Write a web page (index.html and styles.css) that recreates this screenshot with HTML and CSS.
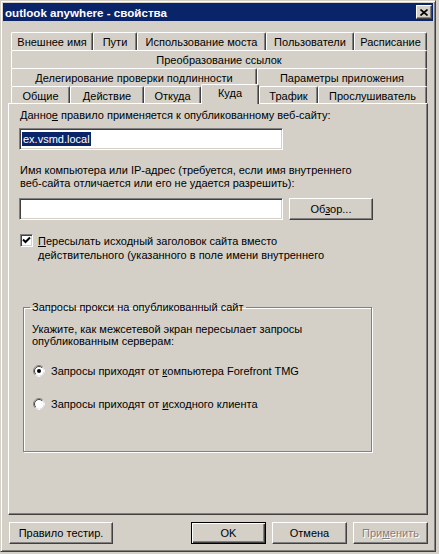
FILE: index.html
```html
<!DOCTYPE html>
<html lang="ru">
<head>
    <meta charset="UTF-8">
    <title>outlook anywhere - свойства</title>
    <link rel="stylesheet" href="styles.css">
</head>
<body>
    <div class="window">
        <div class="titlebar">
            <span class="title">outlook anywhere - свойства</span>
            <button class="close-btn">
                <svg width="8" height="7" viewBox="0 0 8 7"><path d="M0.5 0.5 L7.5 6.5 M7.5 0.5 L0.5 6.5" stroke="#000" stroke-width="1.6" fill="none"/></svg>
            </button>
        </div>
        <div class="dialog">
            <!-- tab strip, bottom row holds the selected tab -->
            <div class="tabs">
                <div class="tab-row">
                    <div class="tab tab-extname">Внешнее имя</div>
                    <div class="tab tab-paths">Пути</div>
                    <div class="tab tab-bridge">Использование моста</div>
                    <div class="tab tab-users">Пользователи</div>
                    <div class="tab tab-schedule">Расписание</div>
                </div>
                <div class="tab-row">
                    <div class="tab tab-full">Преобразование ссылок</div>
                </div>
                <div class="tab-row">
                    <div class="tab tab-deleg">Делегирование проверки подлинности</div>
                    <div class="tab tab-appset">Параметры приложения</div>
                </div>
                <div class="tab-row tab-row-last">
                    <div class="tab tab-general">Общие</div>
                    <div class="tab tab-action">Действие</div>
                    <div class="tab tab-from">Откуда</div>
                    <div class="tab tab-to tab-active">Куда</div>
                    <div class="tab tab-traffic">Трафик</div>
                    <div class="tab tab-listener">Прослушиватель</div>
                </div>
            </div>

            <div class="panel">
                <div class="label">Данно<u>е</u> правило применяется к опубликованному веб-сайту:</div>
                <div class="field field-first"><span class="selected-text">ex.vsmd.local</span></div>

                <div class="label label-multi">Имя компьютера или IP-адрес (требуется, если имя внутреннего<br>веб-сайта отличается или его не удается разрешить):</div>
                <div class="field-row">
                    <div class="field"></div>
                    <button class="btn btn-browse">Об<u>з</u>ор...</button>
                </div>

                <div class="check-row">
                    <span class="checkbox">
                        <svg width="9" height="9" viewBox="0 0 9 9"><path d="M1 3.5 L3.5 6 L8 1.5" stroke="#000" stroke-width="2" fill="none"/></svg>
                    </span>
                    <div class="check-label"><u>П</u>ересылать исходный заголовок сайта вместо<br>действительного (указанного в поле имени внутреннего</div>
                </div>

                <fieldset class="group">
                    <legend>Запросы прокси на опубликованный сайт</legend>
                    <div class="group-text">Укажите, как межсетевой экран пересылает запросы<br>опубликованным серверам:</div>
                    <div class="radio-row radio-first">
                        <svg class="radio" width="12" height="12" viewBox="0 0 12 12">
                            <circle cx="6" cy="6" r="5.5" fill="#fff" stroke="#808080"/>
                            <path d="M9.9 2.1 A5.5 5.5 0 0 1 2.1 9.9" stroke="#fff" fill="none"/>
                            <path d="M2.8 9.2 A4.5 4.5 0 0 1 9.2 2.8" stroke="#404040" fill="none"/>
                            <circle cx="6" cy="6" r="2" fill="#000"/>
                        </svg>
                        <span>Запросы приходят от <u>к</u>омпьютера Forefront TMG</span>
                    </div>
                    <div class="radio-row radio-second">
                        <svg class="radio" width="12" height="12" viewBox="0 0 12 12">
                            <circle cx="6" cy="6" r="5.5" fill="#fff" stroke="#808080"/>
                            <path d="M9.9 2.1 A5.5 5.5 0 0 1 2.1 9.9" stroke="#fff" fill="none"/>
                            <path d="M2.8 9.2 A4.5 4.5 0 0 1 9.2 2.8" stroke="#404040" fill="none"/>
                        </svg>
                        <span>Запросы приходят от <u>и</u>сходного клиента</span>
                    </div>
                </fieldset>
            </div>

            <div class="button-bar">
                <button class="btn btn-test">Правило тестир.</button>
                <div class="button-group">
                    <button class="btn btn-default">OK</button>
                    <button class="btn">Отмена</button>
                    <button class="btn btn-disabled">При<u>м</u>енить</button>
                </div>
            </div>
        </div>
    </div>
</body>
</html>
```

FILE: styles.css
```css
body, html { margin: 0; padding: 0; background-color: #d4d0c8; font-family: "Liberation Sans", Arial, sans-serif; font-size: 11px; color: #000; }
.window { width: 436px; height: 552px; box-sizing: border-box; border: 1px solid; border-color: #d4d0c8 #404040 #404040 #d4d0c8; box-shadow: inset 1px 1px #fff, inset -1px -1px #808080; padding: 2px; display: flex; flex-direction: column; }
.titlebar { height: 18px; flex: none; background-color: #0a246a; display: flex; align-items: center; justify-content: space-between; padding: 0 1px 0 2px; }
.title { color: white; font-weight: bold; font-size: 11.6px; }
.close-btn { width: 16px; height: 14px; padding: 0; box-sizing: border-box; background-color: #d4d0c8; border: 1px solid; border-color: #fff #404040 #404040 #fff; box-shadow: inset -1px -1px #808080; display: flex; align-items: center; justify-content: center; }
.dialog { flex: 1; display: flex; flex-direction: column; padding: 11px 5px 0 5px; }

/* tabs */
.tabs { margin: 0 1px 0 3px; }
.tab-row { display: flex; height: 18px; }
.tab-row-last { height: 17px; }
.tab { box-sizing: border-box; flex: none; background-color: #d4d0c8; border-top: 1px solid #fff; border-left: 1px solid #fff; border-right: 1px solid #404040; border-radius: 2px 2px 0 0; box-shadow: inset -1px 0 #808080; display: flex; align-items: center; justify-content: center; white-space: nowrap; padding-top: 1px; }
.tab-active { position: relative; z-index: 1; margin: -2px 0 -1px; padding: 0 0 4px; }
.tab-extname { width: 82px; }
.tab-paths { width: 44px; }
.tab-bridge { width: 129px; }
.tab-users { width: 88px; }
.tab-schedule { width: 73px; }
.tab-full { width: 416px; }
.tab-deleg { width: 246px; }
.tab-appset { width: 170px; }
.tab-general { width: 59px; }
.tab-action { width: 74px; }
.tab-from { width: 57px; }
.tab-to { width: 58px; }
.tab-traffic { width: 59px; }
.tab-listener { width: 109px; }

/* tab page */
.panel { height: 412px; box-sizing: border-box; border: 1px solid; border-color: #fff #404040 #404040 #fff; box-shadow: inset -1px -1px #808080; padding: 4px 10px 0 10px; }
.label { line-height: 14px; padding-left: 1px; white-space: nowrap; }
.label-multi { line-height: 13px; margin-top: 14px; }
.field { width: 264px; height: 22px; box-sizing: border-box; background-color: white; border: 1px solid; border-color: #808080 #fff #fff #808080; box-shadow: inset 1px 1px #404040, inset -1px -1px #d4d0c8; padding: 0 2px; display: flex; align-items: center; }
.field-first { margin-top: 6px; }
.selected-text { background-color: #0a246a; color: white; line-height: 14px; padding: 0 1px; }
.field-row { display: flex; gap: 6px; margin-top: 8px; }
.btn { box-sizing: border-box; height: 22px; width: 75px; padding: 0; font-family: inherit; font-size: 11px; color: #000; background-color: #d4d0c8; border: 1px solid; border-color: #fff #404040 #404040 #fff; box-shadow: inset -1px -1px #808080; }
.btn-browse { width: 84px; }
.check-row { display: flex; margin-top: 14px; padding-left: 1px; }
.checkbox { width: 13px; height: 13px; box-sizing: border-box; flex: none; background-color: white; border: 1px solid; border-color: #808080 #fff #fff #808080; box-shadow: inset 1px 1px #404040, inset -1px -1px #d4d0c8; display: flex; align-items: center; justify-content: center; }
.check-label { margin-left: 5px; margin-top: 0; line-height: 14px; white-space: nowrap; }

/* group box */
.group { margin: 38px 0 0 4px; width: 349px; height: 152px; box-sizing: border-box; border: 1px solid #808080; box-shadow: 1px 1px #fff, inset 1px 1px #fff; padding: 9px 8px 0 8px; }
.group legend { padding: 0 2px; margin-left: -2px; line-height: 14px; }
.group-text { line-height: 12px; white-space: nowrap; }
.radio-row { display: flex; align-items: center; gap: 6px; height: 14px; padding-left: 1px; white-space: nowrap; }
.radio { flex: none; }
.radio-first { margin-top: 17px; }
.radio-second { margin-top: 19px; }

/* bottom buttons */
.button-bar { display: flex; justify-content: space-between; margin-top: 7px; padding-left: 1px; }
.btn-test { width: 104px; }
.button-group { display: flex; gap: 6px; }
.btn-default { border: 1px solid #000; box-shadow: inset 1px 1px #fff, inset -1px -1px #404040, inset -2px -2px #808080; }
.btn-disabled { color: #808080; text-shadow: 1px 1px #fff; }
```
